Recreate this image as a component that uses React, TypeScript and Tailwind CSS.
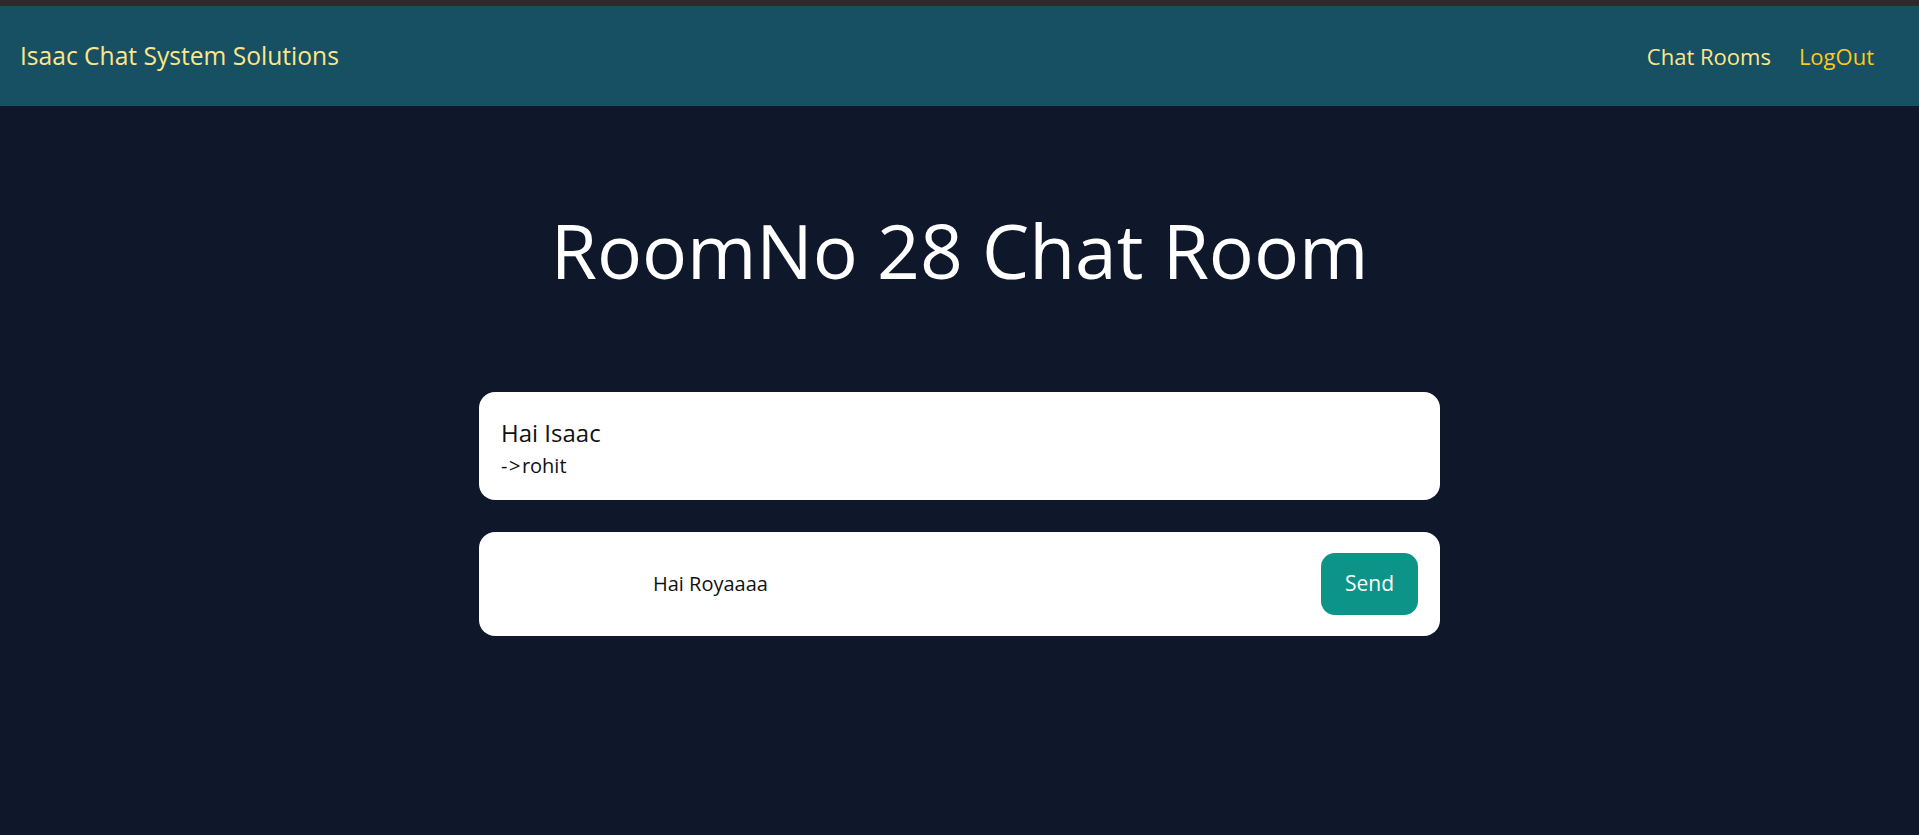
import React, { useState } from 'react';

const font = { fontFamily: '"Open Sans", "Noto Sans", sans-serif' };

const App: React.FC = () => {
  const [message, setMessage] = useState('Hai Royaaaa');

  return (
    <div className="min-h-[835px] bg-[#0f172a]" style={font}>
      <div className="h-[6px] bg-[#2b2b2b]" />
      <nav className="h-[100px] bg-[#174f63] flex items-center justify-between pl-[20px] pr-[45px]">
        <a href="#" className="text-[#fde68a] text-[24.6px] pt-[1px]">Isaac Chat System Solutions</a>
        <div className="flex items-center gap-[28px] text-[22px] pt-[1px]">
          <a href="#" className="text-[#fde68a]">Chat Rooms</a>
          <a href="#" className="text-[#facc15]">LogOut</a>
        </div>
      </nav>

      <main className="flex flex-col items-center">
        <h1 className="mt-[107px] text-white text-[75px] leading-none tracking-[-0.1px]">RoomNo 28 Chat Room</h1>

        <div className="mt-[104px] w-[961px] flex flex-col gap-[32px]">
          <div className="bg-white rounded-[16px] h-[108px] px-[22px] pt-[25px] text-[#111]">
            <p className="text-[24px] leading-[32px]">Hai Isaac</p>
            <p className="text-[20px] leading-[33px]"><span className="tracking-[1.5px]">-&gt;</span>rohit</p>
          </div>

          <div className="bg-white rounded-[16px] h-[104px] pl-[22px] pr-[22px] flex items-center justify-between">
            <input
              value={message}
              onChange={(e) => setMessage(e.target.value)}
              className="ml-[152px] flex-1 outline-none text-[20px] text-[#111] bg-transparent"
            />
            <button className="h-[62px] w-[97px] rounded-[14px] bg-[#0d9488] text-white text-[21px]">Send</button>
          </div>
        </div>
      </main>
    </div>
  );
};

export default App;
